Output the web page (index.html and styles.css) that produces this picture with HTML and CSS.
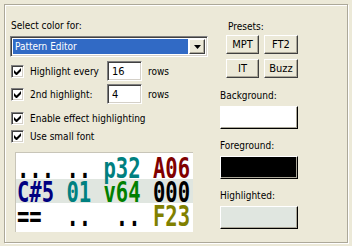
FILE: index.html
```html
<!DOCTYPE html>
<html lang="en">
<head>
    <meta charset="UTF-8">
    <title>Pattern colours</title>
    <link rel="stylesheet" href="styles.css">
</head>
<body>
    <div class="frame">
        <div class="left">
            <div class="label">Select color for:</div>
            <div class="combo">
                <div class="combo-value">Pattern Editor</div>
                <div class="combo-btn">
                    <svg width="7" height="4" viewBox="0 0 7 4"><path d="M0 0h7L3.5 4z" fill="#000"/></svg>
                </div>
            </div>

            <div class="opt opt-input">
                <span class="check"></span>
                <span class="opt-text">Highlight every</span>
                <span class="field">16</span>
                <span class="unit">rows</span>
            </div>
            <div class="opt opt-input second">
                <span class="check"></span>
                <span class="opt-text">2nd highlight:</span>
                <span class="field">4</span>
                <span class="unit">rows</span>
            </div>
            <div class="opt third">
                <span class="check"></span>
                <span class="opt-text">Enable effect highlighting</span>
            </div>
            <div class="opt">
                <span class="check"></span>
                <span class="opt-text">Use small font</span>
            </div>

            <div class="preview">
                <div class="prow"><span class="pline"><b class="c-black">... ..</b> <b class="c-teal">p32</b> <b class="c-red">A06</b></span></div>
                <div class="prow hl"><span class="pline"><b class="c-navy">C#5</b> <b class="c-teal">01</b> <b class="c-green">v64</b> <b class="c-black">000</b></span></div>
                <div class="prow"><span class="pline"><b class="c-black">==  ..  ..</b> <b class="c-olive">F23</b></span></div>
            </div>
        </div>

        <div class="right">
            <div class="presets">
                <div class="label">Presets:</div>
                <div class="preset-grid">
                    <button class="btn">MPT</button>
                    <button class="btn">FT2</button>
                    <button class="btn">IT</button>
                    <button class="btn">Buzz</button>
                </div>
            </div>

            <div class="label color-label">Background:</div>
            <div class="swatch sw-white"></div>
            <div class="label color-label">Foreground:</div>
            <div class="swatch sw-black"></div>
            <div class="label color-label">Highlighted:</div>
            <div class="swatch sw-hl"></div>
        </div>
    </div>
</body>
</html>
```
FILE: styles.css
```css
body {
    margin: 0;
    background-color: #ece9d8;
    font-family: "DejaVu Sans Condensed", "Liberation Sans", Arial, sans-serif;
    font-size: 10px;
    color: #000;
}

.frame {
    box-sizing: border-box;
    width: 344px;
    height: 239px;
    margin: 4px;
    border: 1px solid #aca899;
    box-shadow: inset 1px 1px #fff, 1px 1px #fff;
    padding: 14px 0 0 5px;
    display: flex;
}

.label {
    height: 13px;
    line-height: 13px;
    white-space: nowrap;
}

.left {
    width: 198px;
    margin-left: 1px;
}

/* combo box */
.combo {
    box-sizing: border-box;
    margin: 4px 0 0 -1px;
    width: 198px;
    height: 21px;
    border: 1px solid;
    border-color: #808080 #fff #fff #808080;
    box-shadow: inset 1px 1px #404040, inset -1px -1px #d4d0c8;
    background: #fff;
    padding: 2px;
    display: flex;
}

.combo-value {
    flex: 1;
    background: #316ac5;
    color: #fff;
    line-height: 15px;
    padding-left: 2px;
}

.combo-btn {
    box-sizing: border-box;
    width: 16px;
    height: 15px;
    margin-left: 1px;
    background: #ece9d8;
    border: 1px solid;
    border-color: #fff #404040 #404040 #fff;
    box-shadow: inset -1px -1px #aca899;
    display: flex;
    align-items: center;
    justify-content: center;
}

/* check options */
.opt {
    display: flex;
    align-items: center;
    height: 14px;
    margin-top: 4px;
}

.opt-input {
    height: 20px;
}

.second {
    margin-top: 3px;
}

.third {
    margin-top: 7px;
}

.check {
    box-sizing: border-box;
    width: 13px;
    height: 13px;
    border: 1px solid;
    border-color: #808080 #fff #fff #808080;
    box-shadow: inset 1px 1px #404040, inset -1px -1px #d4d0c8;
    background: #fff url("data:image/svg+xml;utf8,<svg xmlns='http://www.w3.org/2000/svg' width='7' height='7'><path d='M0 2v3l2 2h1l4-4V0L2.5 4.5z' fill='black'/></svg>") no-repeat 2px 2px;
    flex-shrink: 0;
}

.opt-text {
    margin-left: 6px;
    white-space: nowrap;
}

.opt-input .opt-text {
    width: 77px;
}

.field {
    box-sizing: border-box;
    width: 35px;
    height: 20px;
    border: 1px solid;
    border-color: #808080 #fff #fff #808080;
    box-shadow: inset 1px 1px #404040, inset -1px -1px #d4d0c8;
    background: #fff;
    padding: 3px 0 0 4px;
    font-size: 11px;
}

.unit {
    margin-left: 6px;
}

/* pattern preview */
.preview {
    box-sizing: border-box;
    width: 178px;
    height: 80px;
    margin: 9px 0 0 4px;
    background: #fff;
    border-top: 1px solid #c8c5b8;
    border-left: 1px solid #c8c5b8;
    padding-top: 2px;
    overflow: hidden;
}

.prow {
    display: flex;
    height: 24px;
    padding-left: 1px;
}

.prow.hl {
    background: #e0e6e0;
}

.pline {
    white-space: pre;
    font-family: "DejaVu Sans Mono", monospace;
    font-size: 28px;
    line-height: 27px;
    transform: scaleX(0.733);
    transform-origin: left center;
}

.c-black { color: #000; }
.c-teal { color: #008080; }
.c-red { color: #800000; }
.c-navy { color: #000080; }
.c-green { color: #008000; }
.c-olive { color: #808000; }

/* right column */
.right {
    margin-left: 11px;
    width: 78px;
}

.presets {
    padding: 1px 0 0 6px;
}

.presets .label {
    padding-left: 2px;
}

.preset-grid {
    margin-top: 2px;
    display: grid;
    grid-template-columns: 33px 34px;
    grid-auto-rows: 19px;
    column-gap: 5px;
    row-gap: 5px;
}

.btn {
    box-sizing: border-box;
    margin: 0;
    padding: 0;
    font: inherit;
    font-size: 11px;
    color: #000;
    background: #ece9d8;
    border: 1px solid;
    border-color: #fff #404040 #404040 #fff;
    box-shadow: inset -1px -1px #aca899;
}

.color-label {
    margin-top: 10px;
}

.presets + .color-label {
    margin-top: 11px;
}

.swatch {
    box-sizing: border-box;
    height: 23px;
    margin-top: 4px;
    border: 1px solid;
    border-color: #fff #000 #000 #fff;
    box-shadow: inset -1px -1px #aca899;
}

.sw-white { background: #fff; }
.sw-black { background: #000; }
.sw-hl { background: #e0e6e0; }
```
